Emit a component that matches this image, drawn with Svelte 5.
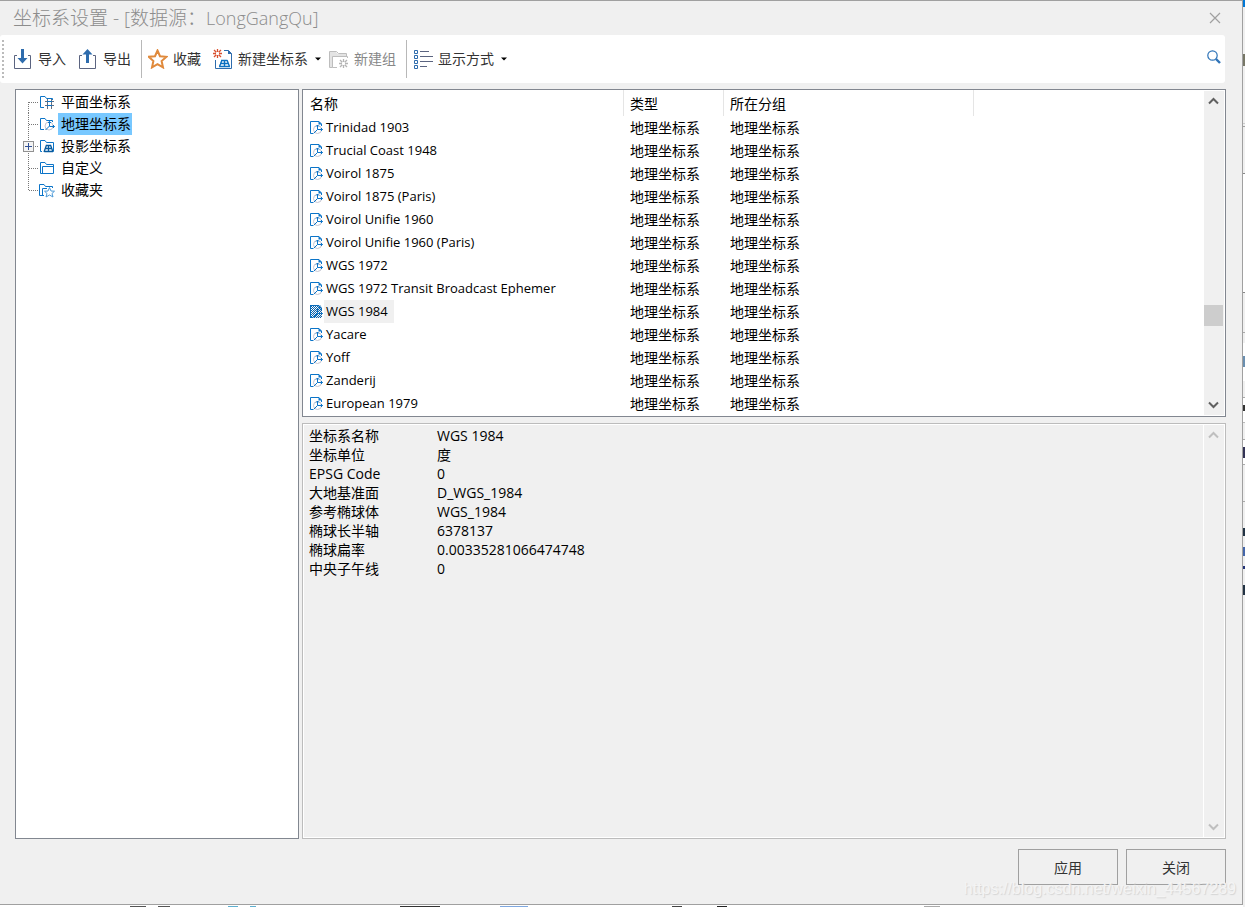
<script lang="ts">
  interface TreeItem {
    label: string;
    icon: string;
    expandable?: boolean;
  }

  const tree: TreeItem[] = [
    { label: '平面坐标系', icon: 'plane' },
    { label: '地理坐标系', icon: 'geo' },
    { label: '投影坐标系', icon: 'projected', expandable: true },
    { label: '自定义', icon: 'folder' },
    { label: '收藏夹', icon: 'favorite' }
  ];

  const names = [
    'Trinidad 1903',
    'Trucial Coast 1948',
    'Voirol 1875',
    'Voirol 1875 (Paris)',
    'Voirol Unifie 1960',
    'Voirol Unifie 1960 (Paris)',
    'WGS 1972',
    'WGS 1972 Transit Broadcast Ephemer',
    'WGS 1984',
    'Yacare',
    'Yoff',
    'Zanderij',
    'European 1979'
  ];

  const details = [
    ['坐标系名称', 'WGS 1984'],
    ['坐标单位', '度'],
    ['EPSG Code', '0'],
    ['大地基准面', 'D_WGS_1984'],
    ['参考椭球体', 'WGS_1984'],
    ['椭球长半轴', '6378137'],
    ['椭球扁率', '0.00335281066474748'],
    ['中央子午线', '0']
  ];

  let group = $state('地理坐标系');
  let selected = $state('WGS 1984');
</script>

{#snippet chevron(up: boolean)}
  <svg width="11" height="8" viewBox="0 0 11 8" fill="none" stroke="currentColor" stroke-width="2">
    <path d={up ? 'M1 6.5L5.5 2L10 6.5' : 'M1 1.5L5.5 6L10 1.5'} />
  </svg>
{/snippet}

{#snippet caret()}
  <svg class="caret" width="6" height="4" viewBox="0 0 6 4"><path d="M0 0.5H6L3 3.5Z" fill="#000" /></svg>
{/snippet}

{#snippet burst(color: string)}
  <path d="M4.5 0V3M4.5 6V9M0 4.5H3M6 4.5H9M1 1L3.3 3.3M8 1L5.7 3.3M1 8L3.3 5.7M8 8L5.7 5.7" stroke={color} stroke-width="1.3" />
{/snippet}

<div class="desktop">
  <div class="window">
    <header class="titlebar">
      <h1>坐标系设置 - [数据源：<span>LongGangQu]</span></h1>
      <button class="close" aria-label="关闭窗口">
        <svg width="12" height="12" viewBox="0 0 12 12" stroke="#a0a0a0" stroke-width="1.2">
          <path d="M1 1L11 11M11 1L1 11" />
        </svg>
      </button>
    </header>

    <div class="toolbar" role="toolbar">
      <span class="grip"></span>
      <button class="tool">
        <svg width="20" height="20" viewBox="0 0 20 20" fill="none">
          <path d="M4 6.5H1.5V19.5H17.5V6.5H15" stroke="#5b6480" />
          <path d="M8 0H11V9H14.5L9.5 14.5L4.5 9H8Z" fill="#2e6cad" />
        </svg>
        <span>导入</span>
      </button>
      <button class="tool">
        <svg width="20" height="20" viewBox="0 0 20 20" fill="none">
          <path d="M4 6.5H1.5V19.5H17.5V6.5H15" stroke="#5b6480" />
          <path d="M8 14H11V5.5H14.5L9.5 0L4.5 5.5H8Z" fill="#2e6cad" />
        </svg>
        <span>导出</span>
      </button>
      <span class="separator"></span>
      <button class="tool">
        <svg width="20" height="20" viewBox="0 0 20 20" fill="none">
          <path d="M9.5 1.5L12 7.2L18.5 7.8L13.6 12L15 18.4L9.5 15.2L4 18.4L5.4 12L0.8 7.8L7 7.2Z" stroke="#e08a3c" stroke-width="2" />
        </svg>
        <span>收藏</span>
      </button>
      <button class="tool split">
        <svg width="20" height="20" viewBox="0 0 20 20" fill="none">
          {@render burst('#d9502e')}
          <path d="M11 1.5H15.5L18.5 4.5V19.5H2.5V11" stroke="#2e6cad" />
          <path d="M15 1V5H19Z" fill="#2e6cad" />
          <path d="M8 11.5H14M7 14.5H15.5M6 17.5H17M9 11L6.5 17.5M11.5 11V17.5M14 11L16.5 17.5" stroke="#0b6fc0" stroke-width="1.4" />
        </svg>
        <span>新建坐标系</span>
        {@render caret()}
      </button>
      <button class="tool" disabled>
        <svg width="20" height="20" viewBox="0 0 20 20" fill="none">
          <path d="M1 3H7L9 5H18V7H4V18H1Z" fill="#e3e3e3" />
          <path d="M3.5 18.5H0.5V2.5H7.5L9.5 4.5H17.5V7.5" stroke="#bdbdbd" />
          <path d="M8 18.5H3.5V7.5H18.5V9" stroke="#bdbdbd" />
          <g transform="translate(10 10)">{@render burst('#b4b4b4')}</g>
        </svg>
        <span>新建组</span>
      </button>
      <span class="separator"></span>
      <button class="tool split">
        <svg width="20" height="20" viewBox="0 0 20 20" fill="none">
          <path d="M1.5 1.5H4.5V4.5H1.5ZM1.5 6.5H4.5V9.5H1.5ZM1.5 11.5H4.5V14.5H1.5ZM1.5 16.5H4.5V19.5H1.5Z" stroke="#2e6cad" />
          <path d="M7 2.5H16M7 7.5H20M7 12.5H20M7 17.5H14" stroke="#5b6480" />
        </svg>
        <span>显示方式</span>
        {@render caret()}
      </button>
      <button class="search" aria-label="搜索">
        <svg width="14" height="14" viewBox="0 0 14 14" fill="none" stroke="#2f74b8">
          <circle cx="5.5" cy="5.5" r="4.7" stroke-width="1.2" />
          <path d="M9 9L13 13" stroke-width="2.4" />
        </svg>
      </button>
    </div>

    <main class="content">
      <ul class="tree">
        {#each tree as item, i}
          <li>
            <span class="branch">
              <svg width="23" height="22" viewBox="0 0 23 22" stroke="#777" stroke-dasharray="1 1">
                <path d="M12.5 {i === 0 ? 11 : 0}V{i === tree.length - 1 ? 12 : 22}" />
                <path d="M13 11.5H23" />
              </svg>
              {#if item.expandable}
                <button class="expander" aria-label="展开">
                  <svg width="7" height="7" viewBox="0 0 7 7" stroke="#2f4f95"><path d="M0 3.5H7M3.5 0V7" /></svg>
                </button>
              {/if}
            </span>
            <button class="node" class:active={group === item.label} onclick={() => (group = item.label)}>
              <svg width="16" height="16" viewBox="0 0 16 16" fill="none" stroke="#0b74c8">
                {#if item.icon === 'plane'}
                  <path d="M5 13.5H1.5V2.5H6L7.5 4.5H13.5V6" />
                  <path d="M6 7.5H15M6 11.5H15M8.5 5V15M12.5 5V15" stroke="#666f80" />
                  <path d="M8 7.5H13M8 11.5H13" />
                {:else if item.icon === 'geo'}
                  <path d="M5 13.5H1.5V2.5H6L7.5 4.5H13.5V6" />
                  <circle cx="10" cy="10" r="4" stroke="#c3c5d2" />
                  <path d="M10.5 5.5V10L6.5 14M10.5 10.5H15.5M9 7L10.5 5.5L12 7M14 9L15.5 10.5L14 12" />
                {:else if item.icon === 'projected'}
                  <path d="M3 13.5H1.5V2.5H6L7.5 4.5H14.5V13.5" />
                  <path d="M7 7.5H12M6 10.5H13M5 13.5H14M7.5 7L5 14M9.5 7V14M11.5 7L14 14" stroke="#075a9e" stroke-width="1.3" />
                {:else if item.icon === 'folder'}
                  <path d="M1.5 13.5V2.5H6L7.5 4.5H14.5V13.5Z" />
                  <path d="M3.5 13V6.5H14" />
                {:else}
                  <path d="M5 13.5H0.5V2.5H5L6.5 4.5H13.5V6M3.5 13V6.5H8" />
                  <path d="M10.5 5.5L12 9L15.5 9.2L13 11.5L14 15L10.5 13L7 15L8 11.5L5.5 9.2L9 9Z" stroke="#4c9ad8" />
                {/if}
              </svg>
              <span>{item.label}</span>
            </button>
          </li>
        {/each}
      </ul>

      <div class="side">
        <section class="list">
          <table>
            <colgroup>
              <col class="name-col" />
              <col class="type-col" />
              <col class="group-col" />
              <col />
            </colgroup>
            <thead>
              <tr><th>名称</th><th>类型</th><th>所在分组</th><th></th></tr>
            </thead>
            <tbody>
              {#each names as name}
                <tr class:selected={selected === name} onclick={() => (selected = name)}>
                  <td>
                    <div class="name">
                      <svg width="14" height="14" viewBox="0 0 14 14" fill="none" stroke="#0b74c8">
                        <path d="M3 12.5H0.5V0.5H9L11.5 3V5" />
                        <path d="M8.5 0V3.5H12Z" fill="#0b74c8" stroke="none" />
                        <circle cx="7.5" cy="8.5" r="4" stroke="#c3c5d2" />
                        <path d="M7.5 4V8.5L3.5 12.5M7.5 8.5H12.5M6 5.5L7.5 4L9 5.5M11 7L12.5 8.5L11 10" />
                        {#if selected === name}
                          <defs>
                            <pattern id="dither" width="2" height="2" patternUnits="userSpaceOnUse">
                              <path d="M0 0H1V1H0ZM1 1H2V2H1Z" fill="#0b65ae" stroke="none" />
                            </pattern>
                          </defs>
                          <path d="M0 0H10L12 3V13H0Z" fill="url(#dither)" stroke="none" />
                        {/if}
                      </svg>
                      <span>{name}</span>
                    </div>
                  </td>
                  <td>地理坐标系</td>
                  <td>地理坐标系</td>
                  <td></td>
                </tr>
              {/each}
            </tbody>
          </table>
          <div class="scrollbar">
            <button aria-label="向上滚动">{@render chevron(true)}</button>
            <div class="track">
              <span class="before"></span>
              <span class="thumb"></span>
              <span class="after"></span>
            </div>
            <button aria-label="向下滚动">{@render chevron(false)}</button>
          </div>
        </section>

        <section class="details">
          <dl>
            {#each details as [term, value]}
              <dt>{term}</dt>
              <dd>{value}</dd>
            {/each}
          </dl>
          <div class="scrollbar inactive">
            <button aria-label="向上滚动" disabled>{@render chevron(true)}</button>
            <button aria-label="向下滚动" disabled>{@render chevron(false)}</button>
          </div>
        </section>
      </div>
    </main>

    <footer>
      <button>应用</button>
      <button>关闭</button>
    </footer>
  </div>
  <span class="watermark">https://blog.csdn.net/weixin_44567289</span>
</div>

<style>
  :global(body) {
    margin: 0;
  }

  .desktop {
    position: relative;
    box-sizing: border-box;
    display: flex;
    min-height: 100vh;
    padding: 0 2px 2px 0;
    font-family: 'Open Sans', 'Noto Sans CJK SC', sans-serif;
    font-size: 14px;
    color: #000;
    /* edges of the application behind the dialog */
    background:
      linear-gradient(to right, transparent 130px, #555 130px 146px, transparent 146px 158px, #555 158px 170px, transparent 170px 228px, #5fb0d0 228px 238px, transparent 238px 250px, #5fb0d0 250px 256px, transparent 256px 400px, #333 400px 440px, transparent 440px 500px, #7fa8e0 500px 528px, transparent 528px 672px, #444 672px 682px, transparent 682px 717px, #222 717px 727px, transparent 727px 924px, #aaa 924px 940px, transparent 940px) left bottom / 100% 1px no-repeat,
      linear-gradient(#0078d7 7px, #f0f0f0 7px 54px, #776 54px 66px, #f0f0f0 66px 123px, #ccc 123px 124px, #f0f0f0 124px 126px, #a0a0a0 126px 127px, #f0f0f0 127px 173px, #888 173px 174px, #fff 174px 292px, #888 292px 293px, #f0f0f0 293px 332px, #aaa 332px 333px, #f0f0f0 333px 343px, #fff 343px 356px, #6a8fb0 356px 367px, #fff 367px 381px, #f0f0f0 381px 397px, #aaa 397px 398px, #fff 398px 405px, #333 405px 411px, #fff 411px 422px, #bbb 422px 423px, #f0f0f0 423px 439px, #aaa 439px 440px, #fff 440px 447px, #335 447px 458px, #fff 458px 464px, #aaa 464px 465px, #f0f0f0 465px 501px, #aaa 501px 502px, #f0f0f0 502px 528px, #234 528px 536px, #f0f0f0 536px 547px, #46a 547px 556px, #f0f0f0 556px 566px, #237 566px 569px, #f0f0f0 569px 585px, #234 585px 595px, #f0f0f0 595px) right top / 2px 100% no-repeat,
      #fff;
  }

  .window {
    flex: 1;
    display: flex;
    flex-direction: column;
    min-width: 0;
    border: 1px solid #a0a0a0;
    border-left: 0;
    background: #f0f0f0;
  }

  button {
    margin: 0;
    padding: 0;
    border: 0;
    background: none;
    font: inherit;
    color: inherit;
  }

  svg {
    display: block;
    flex: none;
  }

  .titlebar {
    display: flex;
    align-items: center;
    justify-content: space-between;
    height: 34px;
    padding: 0 21px 0 13px;
  }

  h1 {
    margin: 0;
    font-size: 19px;
    line-height: 34px;
    font-weight: 300;
    color: #8c8c8c;
    white-space: nowrap;
  }

  h1 span {
    font-size: 18px;
  }

  .toolbar {
    display: flex;
    align-items: center;
    height: 48px;
    margin-right: 17px;
    border-radius: 3px;
    background: #fff;
    color: #333;
  }

  .grip {
    width: 2px;
    height: 38px;
    margin: 0 3px 0 2px;
    background: repeating-linear-gradient(#bbb 0 2px, transparent 2px 4px);
  }

  .tool {
    display: flex;
    align-items: center;
    gap: 5px;
    height: 38px;
    padding: 0 6px;
    white-space: nowrap;
  }

  .tool span {
    padding-bottom: 2px;
  }

  .tool:disabled {
    color: #888;
  }

  .split {
    padding-right: 2px;
  }

  .caret {
    margin-left: 2px;
  }

  .separator {
    width: 1px;
    height: 38px;
    margin: 0 0 0 4px;
    background: #b8b8b8;
  }

  .search {
    margin: 0 4px 4px auto;
  }

  .content {
    flex: 1;
    display: flex;
    gap: 3px;
    padding: 6px 16px 0 15px;
  }

  .tree {
    box-sizing: border-box;
    width: 284px;
    flex: none;
    margin: 0;
    padding: 1px 0;
    border: 1px solid #828790;
    background: #fff;
    list-style: none;
  }

  .tree li {
    display: flex;
    height: 22px;
  }

  .branch {
    position: relative;
  }

  .expander {
    position: absolute;
    top: 6px;
    left: 7px;
    padding: 1px;
    border: 1px solid #919191;
    background: #f4f4f4;
  }

  .node {
    display: flex;
    align-items: center;
    gap: 3px;
  }

  .node span {
    padding: 0 1px 0 3px;
    line-height: 22px;
  }

  .node.active span {
    background: #78c8ff;
  }

  .side {
    flex: 1;
    display: flex;
    flex-direction: column;
    gap: 6px;
    min-width: 0;
  }

  .list {
    display: flex;
    border: 1px solid #828790;
    background: #fff;
  }

  table {
    flex: 1;
    align-self: flex-start;
    table-layout: fixed;
    border-collapse: separate;
    border-spacing: 0;
    width: 0;
    margin-bottom: 1px;
  }

  .name-col {
    width: 321px;
  }

  .type-col {
    width: 100px;
  }

  .group-col {
    width: 250px;
  }

  th {
    height: 25px;
    padding: 1px 0 0 6px;
    border-right: 1px solid #e5e5e5;
    font-weight: 400;
    line-height: 22px;
    text-align: left;
  }

  th:first-child {
    padding-left: 7px;
  }

  th:last-child {
    border-right: 0;
  }

  td {
    height: 23px;
    padding: 0 0 0 6px;
    line-height: 23px;
    white-space: nowrap;
  }

  .name {
    display: flex;
    align-items: center;
    padding-left: 1px;
    font-size: 13px;
  }

  .name span {
    padding: 0 6px 0 2px;
  }

  .selected .name span {
    background: #f0f0f0;
  }

  .scrollbar {
    display: flex;
    flex-direction: column;
    justify-content: space-between;
    width: 20px;
    margin: 1px;
    background: #f0f0f0;
    color: #606060;
  }

  .scrollbar button {
    display: flex;
    align-items: center;
    justify-content: center;
    height: 20px;
    padding-right: 2px;
  }

  .track {
    flex: 1;
    display: flex;
    flex-direction: column;
  }

  .before {
    flex: 194;
  }

  .thumb {
    height: 21px;
    margin-right: 1px;
    background: #cdcdcd;
  }

  .after {
    flex: 69;
  }

  .details {
    flex: 1;
    display: flex;
    border: 1px solid #bcbcbc;
    box-shadow: inset 0 0 0 1px #fff;
  }

  dl {
    flex: 1;
    display: grid;
    grid-template-columns: 128px 1fr;
    align-content: start;
    margin: 0;
    padding: 2px 0 0 6px;
    line-height: 19px;
  }

  dd {
    margin: 0;
  }

  .inactive {
    border-left: 1px solid #fff;
    color: #bfbfbf;
  }

  footer {
    display: flex;
    justify-content: flex-end;
    gap: 8px;
    padding: 10px 16px 19px;
  }

  footer button {
    width: 100px;
    height: 36px;
    border: 1px solid #a0a0a0;
    color: #333;
  }

  .watermark {
    position: absolute;
    right: 9px;
    bottom: 8px;
    font-family: 'Liberation Sans', sans-serif;
    font-size: 16px;
    line-height: 20px;
    color: #f4f4f4;
    text-shadow: 1px 1px 1px #d4d4d4;
    pointer-events: none;
  }
</style>
